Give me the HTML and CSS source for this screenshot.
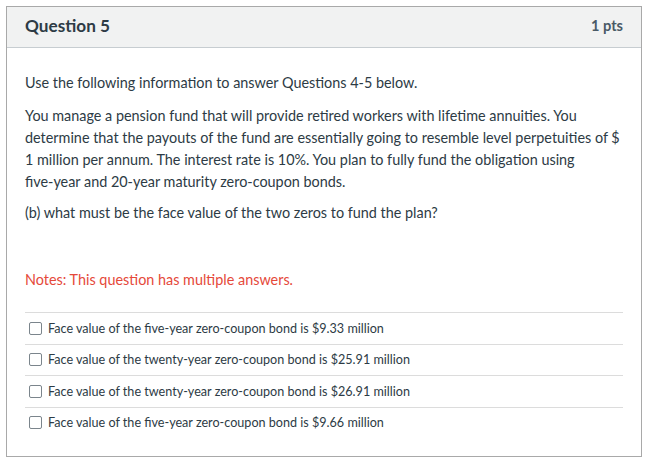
FILE: index.html
```html
<!DOCTYPE html>
<html>
<head>
<meta charset="utf-8">
<link rel="stylesheet" href="styles.css">
</head>
<body>
<div class="question">
  <div class="header">
    <span class="title">Question 5</span>
    <span class="pts">1 pts</span>
  </div>
  <div class="content">
    <p class="lead">Use the following information to answer Questions 4-5 below.</p>
    <p>You manage a pension fund that will provide retired workers with lifetime annuities. You determine that the payouts of the fund are essentially going to resemble level perpetuities of $ 1 million per annum. The interest rate is 10%. You plan to fully fund the obligation using <span class="nw">five-year</span> and 20-year maturity zero-coupon bonds.</p>
    <p>(b) what must be the face value of the two zeros to fund the plan?</p>
    <p class="note">Notes: This question has multiple answers.</p>
    <ul class="answers">
      <li><span class="box"></span>Face value of the five-year zero-coupon bond is $9.33 million</li>
      <li><span class="box"></span>Face value of the twenty-year zero-coupon bond is $25.91 million</li>
      <li><span class="box"></span>Face value of the twenty-year zero-coupon bond is $26.91 million</li>
      <li><span class="box"></span>Face value of the five-year zero-coupon bond is $9.66 million</li>
    </ul>
  </div>
</div>
</body>
</html>
```

FILE: styles.css
```css
html, body { margin: 0; padding: 0; background: #fff; }
body {
  padding: 6px 18px 9px 6px;
  font-family: Lato, "Open Sans", sans-serif;
  color: #2d3b45;
}
.question {
  border: 1px solid #a9a9a9;
  width: 634px;
  height: 449px;
}
.header {
  display: flex;
  justify-content: space-between;
  align-items: center;
  height: 40px;
  padding: 0 18px;
  background: #f1f2f2;
  border-bottom: 1px solid #c7cdd1;
}
.title { font-size: 17.2px; font-weight: 700; color: #2d3b45; line-height: 20px; margin-top: -2px; }
.pts { font-size: 14.6px; font-weight: 700; color: #4a5a66; line-height: 20px; margin-top: -2px; }
.content { padding: 24px 18px 0; }
p { margin: 0 0 9px; font-size: 14.4px; line-height: 22px; }
p.lead { margin-bottom: 11px; }
.nw { white-space: nowrap; }
.note { color: #e5493a; margin-top: 45px; margin-bottom: 21px; }
.answers { list-style: none; margin: 0; padding: 0; }
.answers li {
  display: flex;
  align-items: center;
  height: 30.5px;
  border-top: 1px solid #dcdcdc;
  font-size: 12.6px;
  color: #2d3b45;
}
.box {
  width: 11px;
  height: 11px;
  border: 1px solid #7b858c;
  border-radius: 2px;
  margin: 0 6px 0 4px;
  background: #fff;
}
```
